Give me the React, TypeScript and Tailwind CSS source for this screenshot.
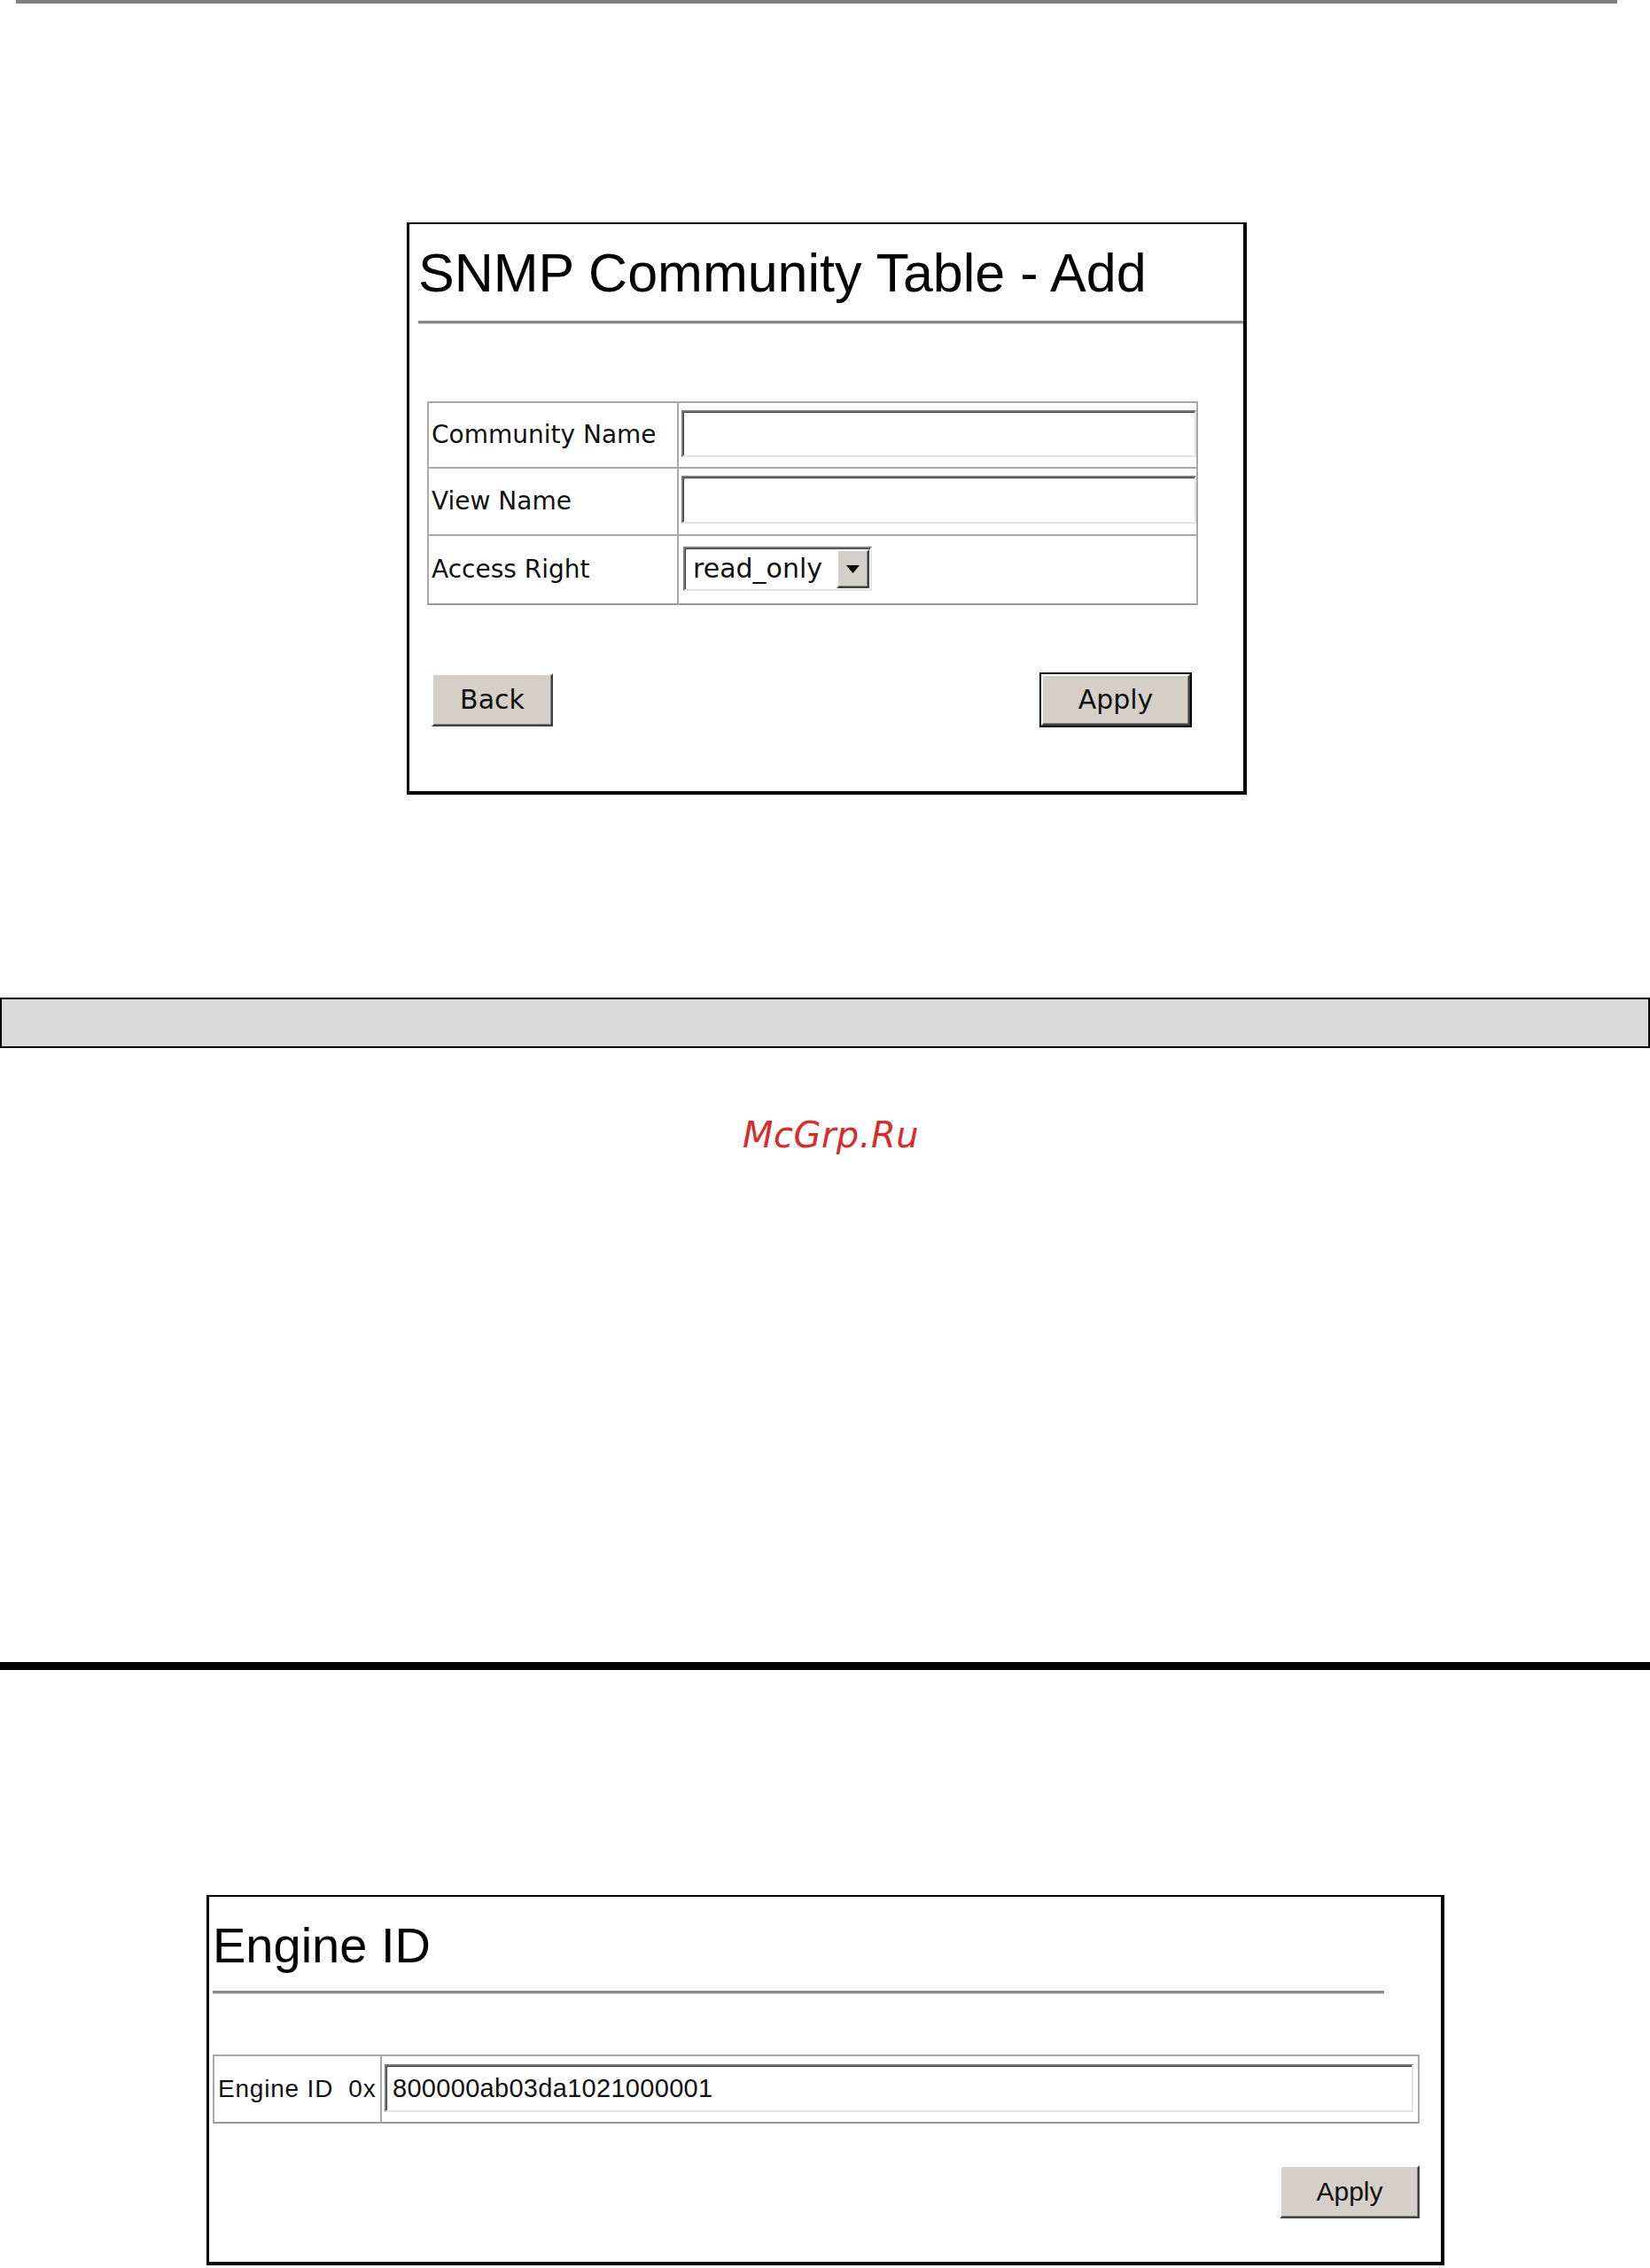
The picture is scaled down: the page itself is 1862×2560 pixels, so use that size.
import React from "react";

// Windows-classic style field and button bevels
const fieldBevel =
  "border-2 border-t-[#7a7a7a] border-l-[#7a7a7a] border-b-[#e4e4e4] border-r-[#e4e4e4] shadow-[inset_1px_1px_0_#3a3a3a] bg-white";
const buttonBevel =
  "border-2 border-t-white border-l-white border-b-[#404040] border-r-[#404040] shadow-[inset_-1px_-1px_0_#808080] bg-[#d4d0c8]";

const labelFont = "font-['DejaVu_Sans',sans-serif]";
const titleFont = "font-['Liberation_Sans',Arial,sans-serif]";

const Groove = ({ className }: { className: string }) => (
  <div className={`h-[4px] border-t-[3px] border-[#8a8a8a] border-b border-b-[#d6d6d6] ${className}`} />
);

const FormRow = ({
  label,
  height,
  last,
  children,
}: {
  label: string;
  height: string;
  last?: boolean;
  children: React.ReactNode;
}) => (
  <div className={`flex ${height} ${last ? "" : "border-b-2 border-[#a9a9a9]"}`}>
    <div className="w-[282px] shrink-0 flex items-center pl-[3px] border-r-2 border-[#a9a9a9]">
      <span className={`${labelFont} text-[28px] leading-none text-[#111]`}>{label}</span>
    </div>
    <div className="flex-1 min-w-0">{children}</div>
  </div>
);

const SnmpCommunityPanel = () => (
  <div className="mt-[247px] ml-[459px] w-[948px] h-[646px] border-l-[3px] border-t-2 border-r-4 border-b-4 border-black bg-white">
    <h1 className={`${titleFont} mt-[25px] ml-[10px] text-[61px] leading-[60px] text-black`}>
      SNMP Community Table - Add
    </h1>
    <Groove className="mt-[24px] ml-[10px]" />

    <div className="mt-[87px] ml-[20px] w-[870px] border-2 border-[#a9a9a9] border-b-[#9a9a9a]">
      <FormRow label="Community Name" height="h-[74px]">
        <div className={`${fieldBevel} ml-[3px] mt-[8px] h-[53px]`} />
      </FormRow>
      <FormRow label="View Name" height="h-[76px]">
        <div className={`${fieldBevel} ml-[3px] mt-[8px] h-[54px]`} />
      </FormRow>
      <FormRow label="Access Right" height="h-[76px]" last>
        <div
          className={`${fieldBevel} ml-[5px] mt-[12px] w-[213px] h-[50px] flex items-center justify-between pl-[9px] pr-[1px]`}
        >
          <span className={`${labelFont} text-[30px] leading-none text-[#111]`}>read_only</span>
          <div className={`${buttonBevel} w-[37px] h-[44px] flex items-center justify-center`}>
            <svg width="15" height="9" viewBox="0 0 15 9">
              <path d="M0 0 L15 0 L7.5 9 Z" fill="#000" />
            </svg>
          </div>
        </div>
      </FormRow>
    </div>

    <div className="mt-[77px] ml-[25px] mr-[58px] flex justify-between items-start">
      <div className={`${buttonBevel} w-[137px] h-[60px] flex items-center justify-center`}>
        <span className={`${labelFont} text-[30px] leading-none text-[#111]`}>Back</span>
      </div>
      <div className="w-[172px] h-[62px] border-2 border-black -mt-[1px]">
        <div className={`${buttonBevel} w-full h-full flex items-center justify-center`}>
          <span className={`${labelFont} text-[30px] leading-none text-[#111]`}>Apply</span>
        </div>
      </div>
    </div>
  </div>
);

const EngineIdPanel = () => (
  <div className="mt-[254px] ml-[233px] w-[1397px] h-[418px] border-l-[3px] border-t-2 border-r-4 border-b-4 border-black bg-white">
    <h1 className={`${titleFont} mt-[27px] ml-[4px] text-[56px] leading-[56px] text-black`}>Engine ID</h1>
    <Groove className="mt-[23px] ml-[4px] w-[1322px]" />

    <div className="mt-[68px] ml-[4px] w-[1362px] h-[78px] border-2 border-[#a9a9a9] border-b-[#9a9a9a] flex">
      <div className="w-[189px] shrink-0 flex items-center pl-[4px] border-r-2 border-[#a9a9a9]">
        <span className={`${titleFont} text-[28px] leading-none text-[#111] tracking-[0.8px] whitespace-pre`}>
          {"Engine ID  0x"}
        </span>
      </div>
      <div className="flex-1 min-w-0 pl-[3px] pr-[5px] pt-[9px]">
        <div className={`${fieldBevel} h-[54px] flex items-center pl-[7px]`}>
          <span className={`${titleFont} text-[29px] leading-none text-[#111] tracking-[0.3px]`}>
            800000ab03da1021000001
          </span>
        </div>
      </div>
    </div>

    <div className={`${buttonBevel} mt-[47px] ml-[1208px] w-[158px] h-[60px] flex items-center justify-center`}>
      <span className={`${titleFont} text-[30px] leading-none text-[#111]`}>Apply</span>
    </div>
  </div>
);

export default function App() {
  return (
    <div className="w-[1862px] h-[2560px] bg-white overflow-hidden flex flex-col">
      <div className="ml-[18px] w-[1807px] h-[4px] bg-[#808080]" />

      <SnmpCommunityPanel />

      <div className="mt-[229px] w-full h-[57px] border-2 border-black bg-[#d9d9d9]" />

      <div className="mt-[78px] pl-[13px] text-center">
        <span
          className={`${labelFont} italic text-[40px] leading-[40px] tracking-[0.5px] text-[#d92b2b]`}
        >
          McGrp.Ru
        </span>
      </div>

      <div className="mt-[575px] w-full h-[9px] bg-black" />

      <EngineIdPanel />
    </div>
  );
}
